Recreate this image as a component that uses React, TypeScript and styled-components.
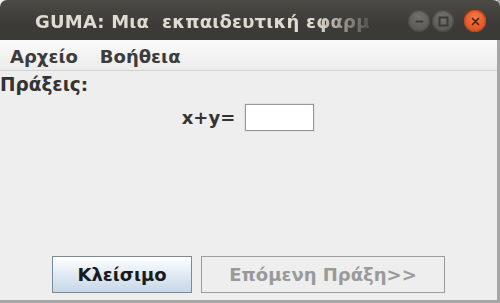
import React from 'react'
import styled, { createGlobalStyle } from 'styled-components'

const GlobalStyle = createGlobalStyle`
  html, body {
    margin: 0;
    padding: 0;
    background: #ffffff;
  }
  body {
    width: 500px;
    height: 303px;
    overflow: hidden;
  }
`

const Window = styled.div`
  width: 500px;
  height: 303px;
  display: flex;
  flex-direction: column;
  box-sizing: border-box;
  border-right: 3px solid #a6a6a6;
  border-bottom: 3px solid #a6a6a6;
  background: #eeeeee;
  font-family: 'DejaVu Sans', sans-serif;
`

const TitleBar = styled.div`
  height: 40px;
  flex: none;
  display: flex;
  align-items: center;
  padding-left: 35px;
  padding-right: 14px;
  padding-top: 2px;
  box-sizing: border-box;
  background: linear-gradient(#4b4a45, #3c3b37 60%, #3a3935);
  border-radius: 7px 7px 0 0;
  margin-right: -3px;
`

// the window manager fades out the title where it runs into the buttons
const Title = styled.div`
  color: #dfdbd2;
  font-size: 18px;
  letter-spacing: 0.2px;
  font-weight: bold;
  white-space: pre;
  -webkit-mask-image: linear-gradient(to right, #000 84%, rgba(0, 0, 0, 0.15) 100%);
  mask-image: linear-gradient(to right, #000 84%, rgba(0, 0, 0, 0.15) 100%);
`

const Controls = styled.div`
  margin-left: auto;
  display: flex;
  align-items: center;
`

const CtrlButton = styled.div<{ $close?: boolean }>`
  width: 22px;
  height: 22px;
  border-radius: 50%;
  display: flex;
  align-items: center;
  justify-content: center;
  margin-left: ${p => (p.$close ? '10px' : '2px')};
  background: ${p =>
    p.$close
      ? 'radial-gradient(circle at 50% 35%, #f47a4c, #e2531f 70%)'
      : 'radial-gradient(circle at 50% 35%, #74726d, #5a5954 70%)'};
  box-shadow: inset 0 0 0 1px ${p => (p.$close ? '#c2461c' : '#4a4945')};
`

const MenuBar = styled.div`
  height: 31px;
  flex: none;
  display: flex;
  align-items: center;
  gap: 22px;
  padding-left: 10px;
  padding-top: 2px;
  box-sizing: border-box;
  background: linear-gradient(#fbfbfb, #ececec);
  border-bottom: 1px solid #d2d2d2;
`

const MenuItem = styled.span`
  font-size: 18px;
  font-weight: bold;
  color: #3c3c3c;
`

const Content = styled.div`
  flex: 1;
  display: flex;
  flex-direction: column;
`

const SectionLabel = styled.div`
  font-size: 18.5px;
  font-weight: bold;
  color: #333333;
  padding-top: 4px;
  line-height: 20px;
`

const EquationRow = styled.div`
  display: flex;
  justify-content: center;
  align-items: center;
  gap: 9px;
  margin-top: 8px;
`

const EqText = styled.span`
  font-size: 18px;
  font-weight: bold;
  color: #333333;
`

const Field = styled.div`
  width: 71px;
  height: 29px;
  box-sizing: border-box;
  background: #ffffff;
  border: 1px solid #e2e2e2;
  box-shadow: inset 0 0 0 1px #8d9aa6;
`

const ButtonRow = styled.div`
  margin-top: auto;
  margin-bottom: 7px;
  display: flex;
  justify-content: center;
  gap: 9px;
`

const Button = styled.div<{ $width: number; $disabled?: boolean }>`
  width: ${p => p.$width}px;
  height: 37px;
  box-sizing: border-box;
  display: flex;
  align-items: center;
  justify-content: center;
  font-size: 18px;
  font-weight: bold;
  color: ${p => (p.$disabled ? '#9a9a9a' : '#1a1a1a')};
  border: 1px solid ${p => (p.$disabled ? '#9c9c9c' : '#7a8a99')};
  background: ${p =>
    p.$disabled ? '#eeeeee' : 'linear-gradient(#ffffff, #dde8f3 55%, #c8d8e8)'};
`

export default function App() {
  return (
    <>
      <GlobalStyle />
      <Window>
        <TitleBar>
          <Title>GUMA: Μια  εκπαιδευτική εφαρμ</Title>
          <Controls>
            <CtrlButton>
              <svg width="11" height="11" viewBox="0 0 11 11">
                <rect x="1.5" y="4.5" width="8" height="2" rx="1" fill="#3c3b37" />
              </svg>
            </CtrlButton>
            <CtrlButton>
              <svg width="11" height="11" viewBox="0 0 11 11">
                <rect x="1.5" y="1.5" width="8" height="8" fill="none" stroke="#3c3b37" strokeWidth="2" />
              </svg>
            </CtrlButton>
            <CtrlButton $close>
              <svg width="11" height="11" viewBox="0 0 11 11">
                <path d="M2.5 2.5 L8.5 8.5 M8.5 2.5 L2.5 8.5" stroke="#4a2414" strokeWidth="1.7" strokeLinecap="round" />
              </svg>
            </CtrlButton>
          </Controls>
        </TitleBar>
        <MenuBar>
          <MenuItem>Αρχείο</MenuItem>
          <MenuItem>Βοήθεια</MenuItem>
        </MenuBar>
        <Content>
          <SectionLabel>Πράξεις:</SectionLabel>
          <EquationRow>
            <EqText>x+y=</EqText>
            <Field />
          </EquationRow>
          <ButtonRow>
            <Button $width={140}>Κλείσιμο</Button>
            <Button $width={244} $disabled>Επόμενη Πράξη&gt;&gt;</Button>
          </ButtonRow>
        </Content>
      </Window>
    </>
  )
}
